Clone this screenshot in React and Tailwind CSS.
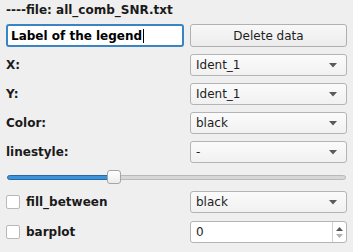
const font = { fontFamily: '"DejaVu Sans", sans-serif' }

function Arrow() {
  return (
    <svg width="8" height="5" viewBox="0 0 8 5" className="shrink-0">
      <path d="M0 0 L8 0 L4 4.5 Z" fill="#5a5a5a" />
    </svg>
  )
}

function Combo({ value }) {
  return (
    <div className="h-[22px] flex items-center justify-between pl-[5px] pr-[9px] rounded-[3px] border border-[#b4b4b4] bg-gradient-to-b from-[#fbfbfb] to-[#f1f1f1] text-[12px] text-[#1e1e1e]">
      <span>{value}</span>
      <Arrow />
    </div>
  )
}

function Label({ children }) {
  return <div className="h-[22px] flex items-center text-[12px] font-bold text-[#1a1a1a]">{children}</div>
}

function Check({ label }) {
  return (
    <div className="h-[22px] flex items-center gap-[6px] text-[12px] font-bold text-[#1a1a1a]">
      <div className="w-[14px] h-[14px] rounded-[2px] border border-[#b9b9b9] bg-white" />
      <span>{label}</span>
    </div>
  )
}

export default function App() {
  const rows = [
    ["X:", "Ident_1"],
    ["Y:", "Ident_1"],
    ["Color:", "black"],
    ["linestyle:", "-"],
  ]
  return (
    <div className="w-[353px] h-[252px] bg-[#efefef] px-[6px] pt-[3px] overflow-hidden" style={font}>
      <div className="h-[14px] leading-[14px] text-[12px] font-bold text-[#1a1a1a]">----file: all_comb_SNR.txt</div>

      <div className="grid grid-cols-[178px_157px] gap-x-[6px] gap-y-[7px] mt-[7px]">
        <div className="h-[23px] flex items-center rounded-[3px] border-2 border-[#3a84c4] bg-white px-[3px] text-[12px] font-bold text-black">
          <span>Label of the legend</span>
          <span className="w-px h-[14px] bg-black ml-px" />
        </div>
        <div className="h-[23px] flex items-center justify-center rounded-[3px] border border-[#b0b0b0] bg-gradient-to-b from-[#f8f8f8] to-[#ececec] text-[12px] text-[#1e1e1e]">
          Delete data
        </div>

        {rows.map(([l, v]) => [
          <Label key={l}>{l}</Label>,
          <Combo key={l + "c"} value={v} />,
        ])}
      </div>

      <div className="h-[28px] flex items-center relative">
        <div className="w-full h-[5px] flex items-center">
          <div className="w-[104px] ml-px h-[5px] rounded-l-[3px] bg-[#3a93db] border border-[#2a6aa3]" />
          <div className="flex-1 mr-px h-[5px] rounded-r-[3px] bg-[#d7d7d7] border border-[#b9b9b9]" />
        </div>
        <div className="absolute left-[101px] top-[7px] w-[14px] h-[14px] rounded-[3px] border border-[#a5a5a5] bg-gradient-to-b from-[#ffffff] to-[#ececec]" />
      </div>

      <div className="grid grid-cols-[178px_157px] gap-x-[6px] gap-y-[8px]">
        <Check label="fill_between" />
        <Combo value="black" />
        <Check label="barplot" />
        <div className="h-[22px] flex items-stretch rounded-[3px] border border-[#b4b4b4] bg-white text-[12px] text-[#1e1e1e]">
          <div className="flex-1 flex items-center pl-[5px]">0</div>
          <div className="w-[14px] border-l border-[#d0d0d0] flex flex-col items-center justify-center gap-[3px]">
            <svg width="7" height="4" viewBox="0 0 7 4">
              <path d="M0 4 L7 4 L3.5 0 Z" fill="#555" />
            </svg>
            <svg width="7" height="4" viewBox="0 0 7 4">
              <path d="M0 0 L7 0 L3.5 4 Z" fill="#b0b0b0" />
            </svg>
          </div>
        </div>
      </div>
    </div>
  )
}
